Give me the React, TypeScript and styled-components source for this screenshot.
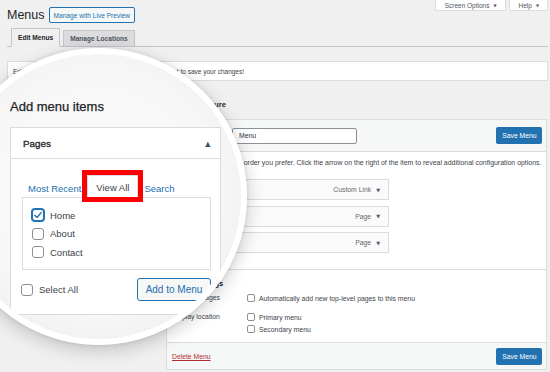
import styled, { createGlobalStyle } from 'styled-components'

const GlobalStyle = createGlobalStyle`
  html, body {
    margin: 0;
    padding: 0;
  }
  body {
    background: #f0f0f1;
    font-family: 'Liberation Sans', Arial, sans-serif;
    color: #3c434a;
  }
`

const Page = styled.div`
  position: relative;
  width: 550px;
  height: 372px;
  overflow: hidden;
  background: #f0f0f1;
  padding: 0 2px 0 7px;
  box-sizing: border-box;
`

const HeaderRow = styled.div`
  display: flex;
  justify-content: space-between;
  align-items: flex-start;
`

const TitleGroup = styled.div`
  display: flex;
  align-items: center;
  gap: 4px;
  padding-top: 7px;
`

const Title = styled.h1`
  margin: 0;
  font-size: 12.5px;
  line-height: 16px;
  font-weight: 400;
  color: #1d2327;
`

const LiveButton = styled.span`
  display: flex;
  align-items: center;
  height: 16px;
  box-sizing: border-box;
  padding: 0 4px;
  border: 1px solid #2271b1;
  border-radius: 2px;
  background: #f6f7f7;
  color: #2271b1;
  font-size: 6.6px;
`

const MetaLinks = styled.div`
  display: flex;
  gap: 3px;
`

const MetaTab = styled.span`
  display: flex;
  align-items: center;
  gap: 4px;
  height: 11px;
  box-sizing: border-box;
  padding: 0 8px 0 9px;
  background: #fff;
  border: 1px solid #dcdcde;
  border-top: none;
  border-radius: 0 0 2px 2px;
  color: #50575e;
  font-size: 6.5px;
`

const Arrow = styled.span<{ $size?: number }>`
  font-family: 'DejaVu Sans', sans-serif;
  font-size: ${({ $size }) => $size ?? 4}px;
  color: #50575e;
`

const TabsRow = styled.div`
  display: flex;
  align-items: flex-end;
  gap: 3px;
  margin-top: 5px;
  padding-left: 4px;
  border-bottom: 1px solid #c3c4c7;
`

const NavTab = styled.span<{ $active?: boolean }>`
  display: flex;
  align-items: center;
  height: ${({ $active }) => ($active ? 17 : 15)}px;
  padding: 0 6px;
  margin-bottom: -1px;
  border: 1px solid #c3c4c7;
  border-bottom: ${({ $active }) => ($active ? '1px solid #f0f0f1' : '1px solid #c3c4c7')};
  background: ${({ $active }) => ($active ? '#f0f0f1' : '#dcdcde')};
  color: ${({ $active }) => ($active ? '#1d2327' : '#50575e')};
  font-size: 6.6px;
  font-weight: 700;
`

const Notice = styled.div`
  display: flex;
  align-items: center;
  height: 20px;
  box-sizing: border-box;
  margin-top: 14px;
  padding-left: 5px;
  background: #fff;
  border: 1px solid #dcdcde;
  font-size: 6.5px;
  color: #3c434a;
`

const Columns = styled.div`
  display: flex;
  gap: 8px;
`

const LeftCol = styled.div`
  width: 151px;
  flex-shrink: 0;
`

const RightCol = styled.div`
  flex: 1;
  padding-right: 1px;
`

const SectionTitle = styled.h2`
  margin: 19px 0 9px 5px;
  font-size: 7.6px;
  line-height: 10px;
  font-weight: 700;
  color: #1d2327;
`

const MenuPanel = styled.div`
  height: 251px;
  box-sizing: border-box;
  background: #fff;
  border: 1px solid #dcdcde;
  display: flex;
  flex-direction: column;
`

const MenuHead = styled.div`
  display: flex;
  align-items: center;
  justify-content: space-between;
  padding: 7px 4px 7px 4px;
  background: #f6f7f7;
  border-bottom: 1px solid #dcdcde;
`

const NameGroup = styled.label`
  display: flex;
  align-items: center;
  gap: 5px;
  font-size: 6.8px;
  color: #1d2327;
`

const NameLabel = styled.span`
  width: 56px;
`

const NameInput = styled.span`
  display: flex;
  align-items: center;
  width: 125px;
  height: 16px;
  box-sizing: border-box;
  padding: 0 6px;
  border: 1px solid #8c8f94;
  border-radius: 2px;
  background: #fff;
  color: #2c3338;
`

const PrimaryButton = styled.span`
  display: flex;
  align-items: center;
  justify-content: center;
  width: 46px;
  height: 17px;
  border-radius: 2px;
  background: #2271b1;
  color: #fff;
  font-size: 6.8px;
`

const MenuBody = styled.div`
  padding: 6px 5px 16px 5px;
  border-bottom: 1px solid #dcdcde;
`

const Hint = styled.p`
  margin: 0;
  font-size: 6.95px;
  line-height: 9px;
  color: #3c434a;
  white-space: nowrap;
`

const ItemList = styled.div`
  display: flex;
  flex-direction: column;
  gap: 5.5px;
  margin-top: 12px;
`

const MenuItem = styled.div`
  display: flex;
  align-items: center;
  justify-content: flex-end;
  gap: 5px;
  width: 217px;
  height: 21px;
  box-sizing: border-box;
  padding-right: 8px;
  background: #fafafa;
  border: 1px solid #dcdcde;
  font-size: 6.8px;
  color: #646970;
`

const Settings = styled.div`
  flex: 1;
  padding: 10px 5px 0 5px;
`

const SettingsTitle = styled.h3`
  margin: 0 0 5px;
  font-size: 7.5px;
  line-height: 8px;
  font-weight: 700;
  color: #1d2327;
`

const SettingRow = styled.div<{ $gap?: number }>`
  display: grid;
  grid-template-columns: 75px 1fr;
  margin-bottom: ${({ $gap }) => $gap ?? 0}px;
  font-size: 6.85px;
  color: #3c434a;
`

const SettingLabel = styled.span`
  line-height: 10px;
`

const OptionList = styled.div`
  display: flex;
  flex-direction: column;
  gap: 2px;
`

const Option = styled.span`
  display: flex;
  align-items: center;
  gap: 4px;
  height: 10px;
`

const SmallBox = styled.span`
  width: 8px;
  height: 8px;
  box-sizing: border-box;
  border: 1px solid #8c8f94;
  border-radius: 2px;
  background: #fff;
`

const MenuFoot = styled.div`
  display: flex;
  align-items: center;
  justify-content: space-between;
  height: 26px;
  padding: 0 4px 0 5px;
  background: #f6f7f7;
  border-top: 1px solid #dcdcde;
`

const DeleteLink = styled.span`
  font-size: 6.8px;
  color: #b32d2e;
  text-decoration: underline;
`

/* magnifier */

const Lens = styled.div`
  position: absolute;
  left: -50px;
  top: 48px;
  width: 297px;
  height: 297px;
  box-sizing: border-box;
  border-radius: 50%;
  border: 6px solid #fff;
  overflow: hidden;
  background: radial-gradient(circle at 50% 48%, #fcfcfc 0%, #f7f7f7 58%, #e9e9e9 100%);
  box-shadow: 0 5px 18px rgba(0, 0, 0, 0.2), 0 0 4px rgba(0, 0, 0, 0.1);
  z-index: 2;
`

const LensContent = styled.div`
  padding: 45px 0 0 54px;
`

const LensTitle = styled.h2`
  margin: 0 0 12px;
  font-size: 13px;
  line-height: 16px;
  font-weight: 400;
  color: #1d2327;
  -webkit-text-stroke: 0.25px #1d2327;
`

const Accordion = styled.div`
  width: 211px;
  height: 188px;
  box-sizing: border-box;
  background: #fff;
  border: 1px solid #dcdcde;
`

const AccordionHead = styled.div`
  display: flex;
  align-items: center;
  justify-content: space-between;
  height: 30px;
  padding: 0 10px 0 12px;
  border-bottom: 1px solid #dcdcde;
  font-size: 9.8px;
  font-weight: 400;
  color: #1d2327;
  -webkit-text-stroke: 0.3px #1d2327;
`

const AccordionBody = styled.div`
  padding: 15px 9px 0 11px;
`

const TabsBar = styled.div`
  display: flex;
  align-items: flex-end;
  gap: 6px;
  height: 23px;
  padding-left: 6px;
  font-size: 9.5px;
`

const PanelTab = styled.span<{ $active?: boolean }>`
  position: relative;
  display: flex;
  align-items: center;
  height: ${({ $active }) => ($active ? '23px' : '12px')};
  box-sizing: border-box;
  padding: ${({ $active }) => ($active ? '1px 8px 0' : '0 0 5px')};
  margin-bottom: ${({ $active }) => ($active ? '-1px' : '0')};
  border: ${({ $active }) => ($active ? '1px solid #dcdcde' : 'none')};
  border-bottom-color: #fff;
  background: ${({ $active }) => ($active ? '#fff' : 'transparent')};
  color: ${({ $active }) => ($active ? '#3c434a' : '#2271b1')};
  z-index: 1;
`

const Highlight = styled.span`
  position: absolute;
  top: -6px;
  bottom: -5px;
  left: -6px;
  right: -6px;
  border: 5px solid #f00;
`

const TabPanel = styled.div`
  display: flex;
  flex-direction: column;
  gap: 6.5px;
  height: 73px;
  box-sizing: border-box;
  padding: 11px 0 0 9px;
  border: 1px solid #dcdcde;
  background: #fff;
`

const CheckRow = styled.label`
  display: flex;
  align-items: center;
  gap: 6px;
  font-size: 9.5px;
  color: #3c434a;
`

const Box = styled.span<{ $checked?: boolean }>`
  display: flex;
  align-items: center;
  justify-content: center;
  width: 12px;
  height: 12px;
  box-sizing: border-box;
  border: 1px solid ${({ $checked }) => ($checked ? '#2271b1' : '#8c8f94')};
  border-radius: 3px;
  background: #fff;
  box-shadow: ${({ $checked }) => ($checked ? '0 0 0 1px #2271b1' : 'none')};
`

const LensFoot = styled.div`
  display: flex;
  align-items: center;
  justify-content: space-between;
  margin: 8px 0 0 -1px;
`

const OutlineButton = styled.span`
  display: flex;
  align-items: center;
  justify-content: center;
  width: 74px;
  height: 23px;
  box-sizing: border-box;
  border: 1px solid #2271b1;
  border-radius: 3px;
  background: #f6f7f7;
  color: #2271b1;
  font-size: 10px;
`

function Check() {
  return (
    <svg width="10" height="10" viewBox="0 0 20 20">
      <path d="M3.5 10.5 L8 15 L16.5 5" fill="none" stroke="#2271b1" strokeWidth="2.6" strokeLinecap="round" strokeLinejoin="round" />
    </svg>
  )
}

const pages = [
  { title: 'Home', checked: true },
  { title: 'About', checked: false },
  { title: 'Contact', checked: false },
]

const menuItems = ['Custom Link', 'Page', 'Page']

export default function App() {
  return (
    <>
      <GlobalStyle />
      <Page>
        <HeaderRow>
          <TitleGroup>
            <Title>Menus</Title>
            <LiveButton>Manage with Live Preview</LiveButton>
          </TitleGroup>
          <MetaLinks>
            <MetaTab>
              Screen Options <Arrow>▼</Arrow>
            </MetaTab>
            <MetaTab>
              Help <Arrow>▼</Arrow>
            </MetaTab>
          </MetaLinks>
        </HeaderRow>

        <TabsRow>
          <NavTab $active>Edit Menus</NavTab>
          <NavTab>Manage Locations</NavTab>
        </TabsRow>

        <Notice>Edit your menu below, or create a new menu. Don&apos;t forget to save your changes!</Notice>

        <Columns>
          <LeftCol />
          <RightCol>
            <SectionTitle>Menu structure</SectionTitle>
            <MenuPanel>
              <MenuHead>
                <NameGroup>
                  <NameLabel>Menu Name</NameLabel>
                  <NameInput>Menu</NameInput>
                </NameGroup>
                <PrimaryButton>Save Menu</PrimaryButton>
              </MenuHead>
              <MenuBody>
                <Hint>
                  Drag the items into the order you prefer. Click the arrow on the right of the item to reveal additional
                  configuration options.
                </Hint>
                <ItemList>
                  {menuItems.map((type, i) => (
                    <MenuItem key={i}>
                      {type}
                      <Arrow $size={5}>▼</Arrow>
                    </MenuItem>
                  ))}
                </ItemList>
              </MenuBody>
              <Settings>
                <SettingsTitle>Menu Settings</SettingsTitle>
                <SettingRow $gap={9}>
                  <SettingLabel>Auto add pages</SettingLabel>
                  <Option>
                    <SmallBox />
                    Automatically add new top-level pages to this menu
                  </Option>
                </SettingRow>
                <SettingRow>
                  <SettingLabel>Display location</SettingLabel>
                  <OptionList>
                    <Option>
                      <SmallBox />
                      Primary menu
                    </Option>
                    <Option>
                      <SmallBox />
                      Secondary menu
                    </Option>
                  </OptionList>
                </SettingRow>
              </Settings>
              <MenuFoot>
                <DeleteLink>Delete Menu</DeleteLink>
                <PrimaryButton>Save Menu</PrimaryButton>
              </MenuFoot>
            </MenuPanel>
          </RightCol>
        </Columns>

        <Lens>
          <LensContent>
            <LensTitle>Add menu items</LensTitle>
            <Accordion>
              <AccordionHead>
                Pages
                <Arrow $size={6}>▲</Arrow>
              </AccordionHead>
              <AccordionBody>
                <TabsBar>
                  <PanelTab>Most Recent</PanelTab>
                  <PanelTab $active>
                    View All
                    <Highlight />
                  </PanelTab>
                  <PanelTab>Search</PanelTab>
                </TabsBar>
                <TabPanel>
                  {pages.map((p) => (
                    <CheckRow key={p.title}>
                      <Box $checked={p.checked}>{p.checked && <Check />}</Box>
                      {p.title}
                    </CheckRow>
                  ))}
                </TabPanel>
                <LensFoot>
                  <CheckRow>
                    <Box />
                    Select All
                  </CheckRow>
                  <OutlineButton>Add to Menu</OutlineButton>
                </LensFoot>
              </AccordionBody>
            </Accordion>
          </LensContent>
        </Lens>
      </Page>
    </>
  )
}
